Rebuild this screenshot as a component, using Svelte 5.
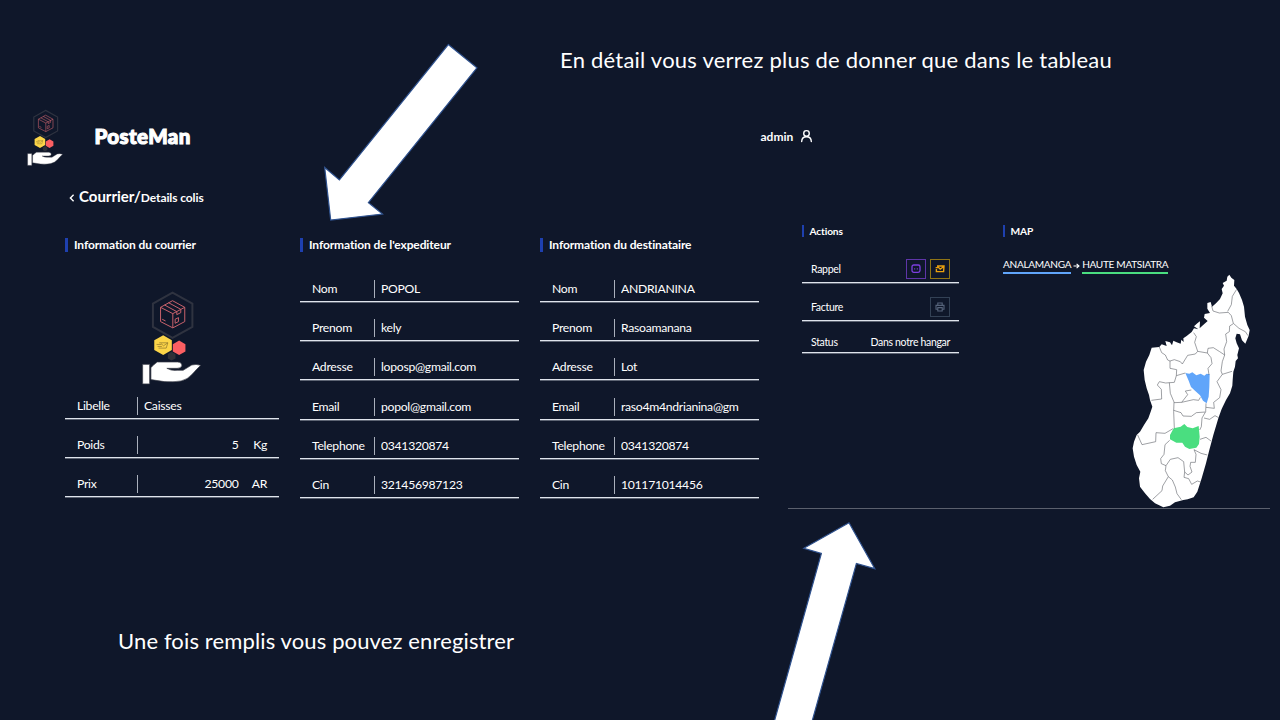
<script>
  const sender = [
    ['Nom', 'POPOL'],
    ['Prenom', 'kely'],
    ['Adresse', 'loposp@gmail.com'],
    ['Email', 'popol@gmail.com'],
    ['Telephone', '0341320874'],
    ['Cin', '321456987123'],
  ];
  const recipient = [
    ['Nom', 'ANDRIANINA'],
    ['Prenom', 'Rasoamanana'],
    ['Adresse', 'Lot'],
    ['Email', 'raso4m4ndrianina@gm'],
    ['Telephone', '0341320874'],
    ['Cin', '101171014456'],
  ];
  const parcel = [
    ['Libelle', 'Caisses', ''],
    ['Poids', '5', 'Kg'],
    ['Prix', '25000', 'AR'],
  ];
</script>

{#snippet logo(cls)}
  <svg class={cls} viewBox="270 180 190 290">
    <path d="M368 187 L428 220 V290 L368 323 L309 290 V220 Z" fill="none" stroke="#2f3340" stroke-width="6" />
    <g fill="none" stroke="#c9626c" stroke-width="3" stroke-linejoin="round">
      <path d="M368 211 L405 231 V274 L369 293 L332 274 V231 Z M332 231 L369 250 L405 231 M369 250 V293" />
      <path d="M344 224 L381 244 M356 217 L393 237 M381 244 V253 L393 247 V237 M376 267 L386 262 V274 L376 279 Z M337 267 L347 272" />
    </g>
    <path d="M340 315 L366 330 V360 L340 375 L313 360 V330 Z" fill="#fcd548" />
    <path d="M328 338 H354 L349 354 H326 M320 343 H334 M323 349 H336 M333 340 L341 347 L354 338" fill="none" stroke="#87702c" stroke-width="2" />
    <path d="M388 331 L407 342 V364 L388 375 L369 364 V342 Z" fill="#fb5f62" />
    <path d="M365 365 L377 372 V385 L365 391 L354 385 V372 Z" fill="#2e3038" />
    <g fill="#fff" stroke="#3a3d47" stroke-width="2">
      <path d="M278 403 H299 V462 H278 Z" />
      <path d="M303 413 Q312 403 322 396 H383 Q397 397 396 407 Q394 415 382 415 H351 Q363 423 382 421 H400 L426 405 Q439 401 453 406 Q440 418 428 432 Q413 449 394 453 Q370 457 343 455 L303 449 Z" />
    </g>
  </svg>
{/snippet}

{#snippet person(title, rows)}
  <section class="person">
    <h2>{title}</h2>
    <div class="rows">
      {#each rows as [label, value]}
        <div class="row"><span class="label">{label}</span><span class="value">{value}</span></div>
      {/each}
    </div>
  </section>
{/snippet}

<div class="page">
  <p class="note top">En détail vous verrez plus de donner que dans le tableau</p>

  <header>
    {@render logo('logo-small')}
    <span class="brand">PosteMan</span>
    <span class="user">admin
      <svg width="13" height="14" viewBox="0 0 14 14" fill="none" stroke="#fff" stroke-width="1.5" stroke-linecap="round">
        <circle cx="7" cy="4.2" r="3" /><path d="M1.8 13 C2 9 4.4 7.8 7 7.8 S12 9 12.2 13" />
      </svg>
    </span>
  </header>

  <nav>
    <svg width="6" height="8" viewBox="0 0 6 8" fill="none" stroke="#fff" stroke-width="1.4"><path d="M4.6 .8 L1.4 4 L4.6 7.2" /></svg>
    <span class="crumb">Courrier/</span><span class="current">Details colis</span>
  </nav>

  <main>
    <section class="parcel">
      <h2>Information du courrier</h2>
      {@render logo('logo-big')}
      <div class="rows">
        {#each parcel as [label, value, unit]}
          <div class="row">
            <span class="label">{label}</span>
            <span class="value" class:number={unit}>{value}</span>
            {#if unit}<span class="unit">{unit}</span>{/if}
          </div>
        {/each}
      </div>
    </section>

    {@render person("Information de l'expediteur", sender)}
    {@render person('Information du destinataire', recipient)}

    <div class="side">
      <section class="actions">
        <h3>Actions</h3>
        <div class="action first">
          <span>Rappel</span>
          <div class="buttons">
            <i class="btn purple"><svg viewBox="0 0 10 10" fill="none" stroke="#7d3fe0" stroke-width="1.3"><rect x="1" y="1" width="8" height="7.4" rx="1.8" /><path d="M3.2 4.8h1M5.8 4.8h1" stroke-width="1.3" /></svg></i>
            <i class="btn amber"><svg viewBox="0 0 10 10" fill="none" stroke="#e9a00e" stroke-width="1.4"><path d="M2 2H9L8.6 7.6H1.4V5M.6 3.6H3M2.6 2.6L5.2 5.2L9 2.4" /></svg></i>
          </div>
        </div>
        <div class="action second">
          <span>Facture</span>
          <i class="btn gray"><svg viewBox="0 0 10 10" fill="none" stroke="#56637a" stroke-width="1.1"><path d="M2.8 3V1H7.2V3M2.6 7.2H1V3.4H9V7.2H7.4M2.8 5.6H7.2V9H2.8Z" /></svg></i>
        </div>
        <div class="action third"><span>Status</span><span>Dans notre hangar</span></div>
      </section>

      <section class="map">
        <h3>MAP</h3>
        <div class="route">
          <span class="from">ANALAMANGA</span>
          <svg width="7" height="6" viewBox="0 0 7 6" fill="none" stroke="#fff" stroke-width="1.1"><path d="M.5 3H6M3.6 .8L6 3L3.6 5.2" /></svg>
          <span class="to">HAUTE MATSIATRA</span>
        </div>
        <svg class="island" viewBox="0 0 420 735">
          <path fill="#fff" d="M328 29 L334 38 343 45 342 62 350 72 357 84 366 105 372 125 375 155 382 180 389 195 386 212 376 236 366 226 360 208 350 206 346 220 350 235 357 250 352 270 354 280 347 288 345 305 340 320 338 345 337 362 330 385 318 405 305 432 295 460 280 510 268 555 258 595 245 640 232 680 221 697 203 703 190 705 165 712 150 722 130 727 105 715 90 702 75 685 60 665 57 640 61 620 50 600 42 575 38 550 42 530 50 510 60 500 72 480 85 460 92 440 97 425 90 405 87 390 80 370 74 345 71 315 78 290 88 270 95 248 118 246 125 238 140 243 136 228 150 232 156 241 160 227 170 232 182 236 184 224 191 231 190 220 200 213 215 201 222 190 235 193 222 184 232 175 240 169 239 190 247 182 263 168 252 158 254 147 270 144 262 131 262 114 272 111 276 125 288 115 300 102 308 85 305 72 312 62 308 54 320 47 322 35Z" />
          <path fill="#60a5fa" d="M196 324L208 326 217 322 229 331 242 326 253 332 260 326 269 328 268 365 266 395 260 415 249 407 240 391 225 377 213 366 206 347Z" />
          <path fill="#4ade80" d="M150 510L161 490 182 485 193 477 202 486 218 490 236 483 239 515 237 537 229 548 208 552 195 545 187 533 169 533 150 523Z" />
          <g fill="none" stroke="#555960" stroke-width="1.7" stroke-linejoin="round">
            <path d="M275 123L279 138 298 144 325 142 334 152 340 175 357 190 376 200 384 212M350 73L337 94 334 119 323 139M340 176L329 183 328 200 317 207 320 230 312 252 314 270 299 260 280 248 264 250 262 264 233 259 224 232 229 215 221 203" />
            <path d="M118 246L125 263 136 270 143 285 150 288 163 284 181 290 187 297 203 271 226 267 233 259M150 288L150 310 170 314 169 332 196 324M262 264L273 278 276 296 264 310 267 330M314 270L307 290 303 318 307 328 336 319M307 328L291 350 303 374 299 398 281 412 283 430 258 427" />
            <path d="M169 332L163 352 137 354 118 350 112 360 124 373 125 402 94 406M148 353L151 385 162 411 161 440 163 490M162 413L185 412 203 389 196 378 214 375M185 412L220 404 236 406 241 397M258 415L257 440 246 459 244 485 239 495M161 436L183 443 189 453 214 454 229 443 256 441M252 459L269 463 285 452 296 458M240 523L258 517 273 528" />
            <path d="M159 491L135 505 108 503 107 530 66 539 53 510M149 526L135 539 132 568 122 581 124 596 138 602 136 617 145 635 157 645 166 666 171 686 184 704M145 635L128 663 126 677 98 703M138 602L151 583 174 578 191 590 194 621 204 630 216 621 210 604 212 592 226 592 228 568 222 554M222 554L243 565 262 570M194 621L192 637 206 641 215 658 232 648 242 651" />
          </g>
        </svg>
      </section>
    </div>
  </main>

  <p class="note bottom">Une fois remplis vous pouvez enregistrer</p>

  <svg class="arrows" width="1280" height="720" viewBox="0 0 1280 720" fill="#fff" stroke="#2f528f" stroke-width="1.2">
    <path d="M448.3 44.5L476.9 67.8 368.4 202.6 382.5 214 330.7 220 324.7 167.5 339.4 180Z" />
    <path d="M849 522.8L874.8 568.7 856.4 563.4 811.3 724 773.6 724 821.4 553.4 803.8 548.3Z" />
  </svg>
</div>

<style>
  :global(body) { margin: 0; background: #0f172a; }
  .page {
    position: relative; width: 1280px; height: 720px; overflow: hidden; box-sizing: border-box;
    background: #0f172a; color: #fff; font-family: Lato, 'Liberation Sans', sans-serif;
    font-size: 12.3px; display: flex; flex-direction: column; white-space: nowrap;
  }
  h2, h3, p { margin: 0; }
  svg { display: block; flex: none; }
  .note { font-size: 22px; line-height: 30px; letter-spacing: .23px; }
  .top { padding: 45px 0 0 560px; height: 63px; flex: none; }
  .bottom { padding: 117px 0 0 118px; letter-spacing: .13px; }

  header { height: 60px; display: flex; align-items: center; padding-left: 26px; flex: none; }
  header :global(.logo-small) { width: 38px; height: 58px; }
  .brand { font-size: 20.5px; font-weight: 900; margin-left: 30.5px; width: 666px; -webkit-text-stroke: 1.1px #fff; letter-spacing: .4px; line-height: 30px; padding-bottom: 4px; }
  .user { display: flex; align-items: center; gap: 7px; font-weight: 700; font-size: 12px; padding-bottom: 4px; }

  nav { display: flex; align-items: baseline; height: 25px; padding: 19px 0 0 69px; flex: none; font-weight: 700; }
  nav svg { margin-right: 4px; }
  .crumb { font-size: 15px; }
  .current { font-size: 12px; letter-spacing: -.1px; }

  main { display: flex; height: 297px; padding-left: 65px; flex: none; }
  h2 { font-size: 12px; line-height: 14px; font-weight: 700; letter-spacing: -.11px; border-left: 3px solid #1e40af; padding-left: 6px; margin-top: 26px; }
  .parcel { width: 214px; margin-right: 21px; }
  .parcel :global(.logo-big) { width: 63px; height: 97px; margin: 38px 0 0 75px; }
  .parcel .rows { margin-top: -7.6px; }
  .person { width: 219px; margin-right: 21px; }
  .person .rows { margin-top: 10.8px; }
  .row { height: 39.2px; box-sizing: border-box; border-bottom: 1px solid #dfe4ec; box-shadow: 0 1px #5d6473; display: flex; align-items: flex-end; padding: 0 20px 3px 12px; line-height: 18px; font-size: 12.2px; letter-spacing: -.28px; }
  .label { width: 62px; flex: none; border-right: 1px solid #aab0bc; }
  .parcel .label { width: 60px; }
  .parcel .row { padding-right: 12px; }
  .value { margin-left: 6px; flex: 1; overflow: hidden; }
  .person .value { margin-right: -2px; }
  .number { text-align: right; }
  .unit { width: 28.5px; text-align: right; }

  .side { width: 482px; margin-left: 8px; border-bottom: 1px solid #5b606d; display: flex; height: 296px; flex: none; }
  h3 { font-size: 10.2px; line-height: 12px; font-weight: 700; letter-spacing: -.15px; border-left: 2px solid #1e40af; padding-left: 5.5px; margin-top: 13px; }
  .actions { width: 157px; margin: 0 44px 0 14px; font-size: 10.5px; letter-spacing: -.32px; }
  .action { box-sizing: border-box; border-bottom: 1px solid #dfe4ec; box-shadow: 0 1px #5d6473; display: flex; justify-content: space-between; align-items: center; padding: 0 9px; }
  .first { height: 27px; margin-top: 19px; }
  .second { height: 27px; margin-top: 11px; }
  .third { height: 22px; margin-top: 10px; }
  .buttons { display: flex; gap: 4px; }
  .btn { width: 20px; height: 20px; box-sizing: border-box; border: 1px solid; display: grid; place-items: center; }
  .btn svg { width: 10px; height: 10px; }
  .purple { border-color: #5e35a8; }
  .amber { border-color: #8f7415; }
  .gray { border-color: #334155; }
  .map { width: 258px; }
  .route { display: flex; align-items: center; gap: 2px; margin-top: 21px; font-size: 10.1px; letter-spacing: -.33px; }
  .route span { line-height: 13px; height: 14px; border-bottom: 2px solid; }
  .route .from { border-color: #60a5fa; }
  .route .to { border-color: #4ade80; }
  .island { width: 140px; height: 245px; margin: -9px 0 0 117px; }
  .arrows { position: absolute; inset: 0; pointer-events: none; }
</style>
